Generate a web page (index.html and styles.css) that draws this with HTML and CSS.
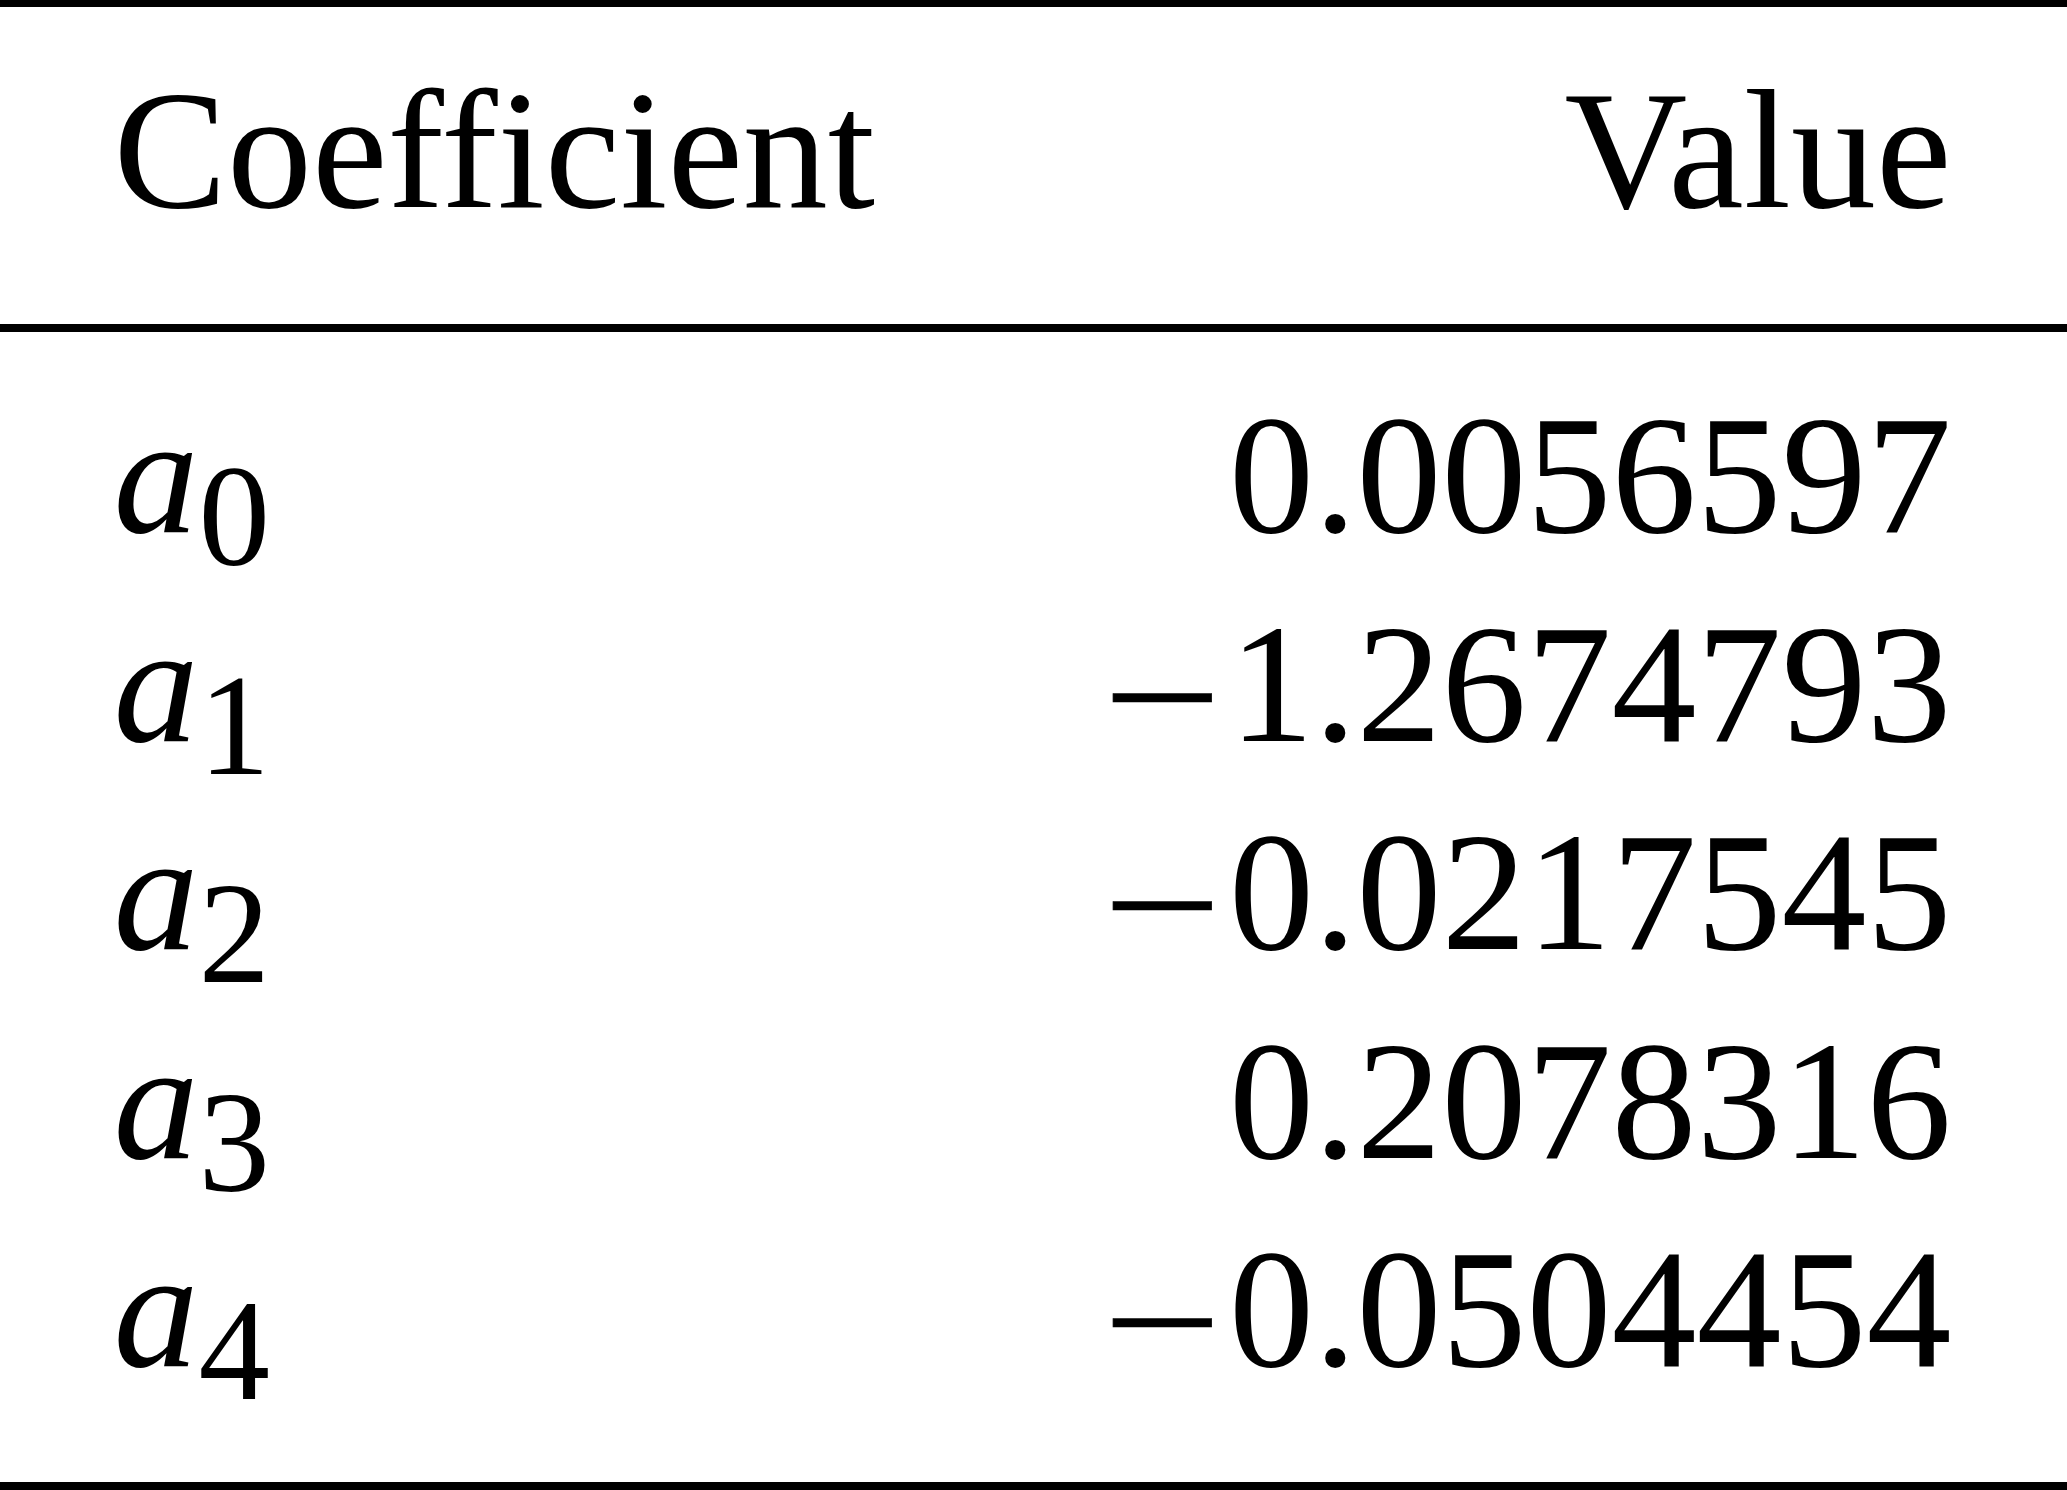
FILE: index.html
```html
<!DOCTYPE html>
<html lang="en">
<head>
<meta charset="utf-8">
<title>Coefficients</title>
<link rel="stylesheet" href="styles.css">
</head>
<body>
<div class="coef-table">
  <div class="row head">
    <div class="cell name">Coefficient</div>
    <div class="cell value">Value</div>
  </div>
  <div class="body">
    <div class="row">
      <div class="cell name"><i class="sym">a</i><sub class="idx">0</sub></div>
      <div class="cell value">0.0056597</div>
    </div>
    <div class="row">
      <div class="cell name"><i class="sym">a</i><sub class="idx">1</sub></div>
      <div class="cell value"><span class="minus">−</span>1.2674793</div>
    </div>
    <div class="row">
      <div class="cell name"><i class="sym">a</i><sub class="idx">2</sub></div>
      <div class="cell value"><span class="minus">−</span>0.0217545</div>
    </div>
    <div class="row">
      <div class="cell name"><i class="sym">a</i><sub class="idx">3</sub></div>
      <div class="cell value">0.2078316</div>
    </div>
    <div class="row">
      <div class="cell name"><i class="sym">a</i><sub class="idx">4</sub></div>
      <div class="cell value"><span class="minus">−</span>0.0504454</div>
    </div>
  </div>
</div>
</body>
</html>
```

FILE: styles.css
```css
html, body {
  margin: 0;
  padding: 0;
  background: #ffffff;
}

.coef-table {
  font-family: "Liberation Serif", "Times New Roman", serif;
  font-size: 170px;
  color: #000000;
  border-top: 7px solid #000000;
  border-bottom: 8px solid #000000;
}

.row {
  display: flex;
  justify-content: space-between;
  align-items: baseline;
  white-space: nowrap;
}

.head {
  line-height: 190px;
  padding: 48px 115.5px 79px 113.5px;
  border-bottom: 8px solid #000000;
}

.body {
  padding: 39.35px 115.5px 68.15px 113.5px;
}

.body .row {
  height: 208.5px;
  line-height: 208.5px;
}

.sym {
  font-style: italic;
}

.idx {
  font-size: 143px;
  vertical-align: -33px;
  line-height: 0;
}

.minus {
  display: inline-block;
  line-height: 1;
  transform: translateY(13px) scaleX(1.245);
  margin-right: 19px;
  -webkit-text-stroke: 0.6px #000000;
}
```
